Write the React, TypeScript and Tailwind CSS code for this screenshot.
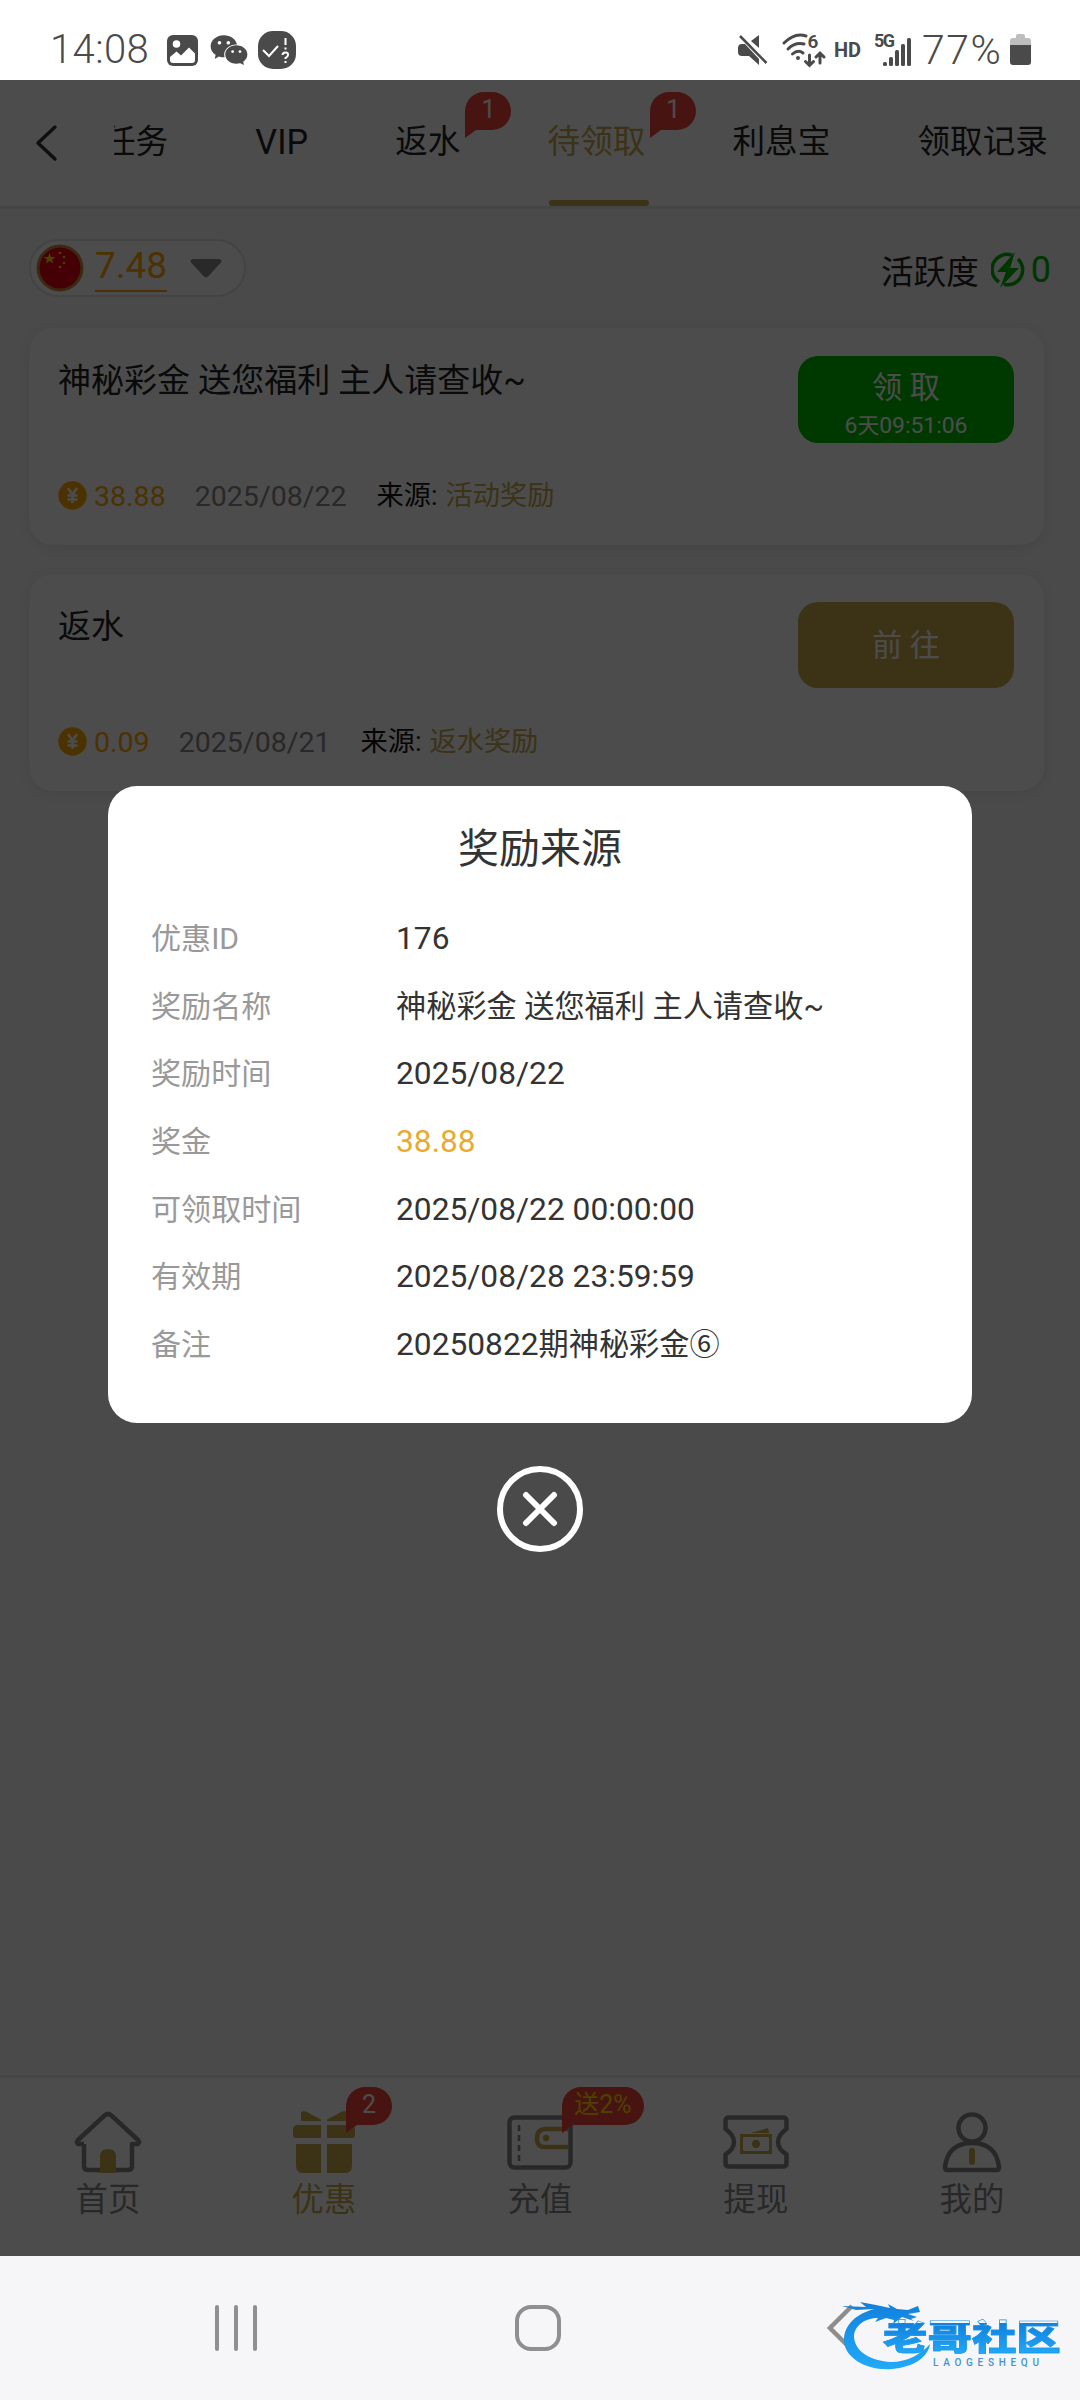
import React from "react";
import { AiFillWechat } from "react-icons/ai";

const tabs = [
  { name: "任务" },
  { name: "VIP" },
  { name: "返水", badge: "1" },
  { name: "待领取", badge: "1", active: true },
  { name: "利息宝" },
  { name: "领取记录" },
];

const rewards = [
  {
    title: "神秘彩金 送您福利 主人请查收~",
    amount: "38.88",
    date: "2025/08/22",
    source: "活动奖励",
    countdown: true,
  },
  {
    title: "返水",
    amount: "0.09",
    date: "2025/08/21",
    source: "返水奖励",
    countdown: false,
  },
];

const details = [
  { label: "优惠ID", value: <Num>176</Num> },
  { label: "奖励名称", value: "神秘彩金 送您福利 主人请查收~" },
  { label: "奖励时间", value: <Num>2025/08/22</Num> },
  { label: "奖金", value: <Num>38.88</Num>, highlight: true },
  { label: "可领取时间", value: <Num>2025/08/22 00:00:00</Num> },
  { label: "有效期", value: <Num>2025/08/28 23:59:59</Num> },
  {
    label: "备注",
    value: (
      <>
        <Num>20250822</Num>期神秘彩金⑥
      </>
    ),
  },
];

// digits are set slightly larger than the Chinese text beside them
function Num({ children }: { children: React.ReactNode }) {
  return <span className="text-[1.05em] leading-none">{children}</span>;
}

function Badge({
  text,
  width = 46,
  color = "text-white",
}: {
  text: string;
  width?: number;
  color?: string;
}) {
  return (
    <span className="relative block h-[46px]" style={{ width }}>
      <svg
        className="absolute inset-0"
        width={width}
        height="46"
        viewBox={`0 0 ${width} 46`}
      >
        <path
          d={`M0 46V19A19 19 0 0 1 19 0H${width - 19}A19 19 0 0 1 ${
            width - 19
          } 38H11Z`}
          fill="#f0453b"
        />
      </svg>
      <span
        className={`relative flex h-[35px] items-center justify-center text-[25px] leading-none ${color}`}
      >
        {text}
      </span>
    </span>
  );
}

function StatusBar() {
  return (
    <div className="flex h-20 items-center bg-white pt-[21px] pr-[49px] pb-[1px] pl-[50px] text-[#4a4a4a]">
      <span className="w-[117px] text-[40px] leading-none font-light tracking-[0.4px]">
        14:08
      </span>
      <svg width="31" height="31" viewBox="0 0 31 31">
        <rect width="31" height="31" rx="6" fill="#4a4a4a" />
        <circle cx="9.5" cy="9" r="3.8" fill="#fff" />
        <path
          d="M3 25V22L9.5 16.5L14 20.5L22 12.5L28 18.5V25Q28 28 25 28H6Q3 28 3 25Z"
          fill="#fff"
        />
      </svg>
      <AiFillWechat className="ml-[10px] size-[42px]" />
      <svg className="ml-[8px]" width="38" height="38" viewBox="0 0 38 38">
        <rect width="38" height="38" rx="15" fill="#4a4a4a" />
        <path
          d="M5 19L11 25L20 15"
          fill="none"
          stroke="#fff"
          strokeWidth="2"
        />
        <path
          d="M27.500 7V14M27.500 16.500V18.500M24.500 24Q24.500 21.500 27.500 21.500T30 24Q30 25.500 27.500 27V28M27.500 30V32"
          fill="none"
          stroke="#fff"
          strokeWidth="2"
        />
      </svg>
      <div className="ml-auto flex items-center">
        <svg width="30" height="32" viewBox="0 0 30 32" fill="#4a4a4a">
          <path d="M0 14Q0 10 4 10H7L21 25V31L11 22H4Q0 22 0 18Z" />
          <path d="M21 1V14L13 7Z" />
          <path d="M2 2L28.500 29" stroke="#4a4a4a" strokeWidth="2.500" />
        </svg>
        <svg
          className="ml-[13px] overflow-visible"
          width="46"
          height="34"
          viewBox="0 0 46 34"
          fill="none"
          stroke="#4a4a4a"
          strokeWidth="3"
          strokeLinecap="round"
        >
          <path d="M3 10Q14 -1 25 3M7 16Q14 9 23 11M11.500 21Q17 16 22 20" />
          <circle cx="17" cy="25" r="1" fill="#4a4a4a" strokeWidth="2" />
          <path d="M28.500 22V32M24.500 28.500L28.500 32.500L32.500 28.500M39 30V20.500M35 24L39 20L43 24" />
          <text
            x="26.500"
            y="15"
            fontSize="19"
            fontWeight="600"
            fill="#4a4a4a"
            stroke="none"
          >
            6
          </text>
        </svg>
        <span className="ml-[7px] text-[20px] leading-none font-bold">HD</span>
        <svg
          className="ml-[13px] overflow-visible"
          width="42"
          height="34"
          viewBox="0 0 42 34"
          fill="#4a4a4a"
        >
          <text x="0" y="14" fontSize="18" fontWeight="700" textLength="21">
            5G
          </text>
          <rect x="9" y="29" width="4" height="4" rx="1.500" />
          <rect x="15" y="24" width="4" height="9" rx="1.500" />
          <rect x="21" y="17" width="4" height="16" rx="1.500" />
          <rect x="27" y="11" width="4" height="22" rx="1.500" />
          <rect x="33" y="5" width="4" height="28" rx="1.500" />
        </svg>
        <span className="ml-[6px] w-[83px] text-[41px] leading-none font-light tracking-[1.5px]">
          77%
        </span>
        <svg className="ml-[5px]" width="21" height="32" viewBox="0 0 21 32">
          <path
            d="M6 2Q6 0 8 0H13Q15 0 15 2V4H18Q21 4 21 7V12H0V7Q0 4 3 4H6Z"
            fill="#bdbdbd"
          />
          <path d="M0 11H21V28Q21 31 18 31H3Q0 31 0 28Z" fill="#4a4a4a" />
        </svg>
      </div>
    </div>
  );
}

function TabHeader() {
  return (
    <header className="flex h-[129px] shrink-0 items-stretch border-b-[3px] border-[#e6e6e6] bg-white">
      <button className="flex w-[114px] shrink-0 items-center pl-[34px]">
        <svg
          width="24"
          height="38"
          viewBox="0 0 24 38"
          fill="none"
          stroke="#333"
          strokeWidth="3.500"
          strokeLinecap="round"
          strokeLinejoin="round"
        >
          <path d="M21 3L4 19L21 35" />
        </svg>
      </button>
      <nav className="flex flex-1 overflow-hidden">
        <div className="-ml-[11px] flex shrink-0 gap-[87.2px]">
          {tabs.map((tab) => (
            <div
              key={tab.name}
              className={`relative flex shrink-0 items-center pb-[1px] text-[32.6px] whitespace-nowrap ${
                tab.active ? "text-[#c8a84b]" : "text-[#222]"
              }`}
            >
              {tab.name === "VIP" ? <Num>VIP</Num> : tab.name}
              {tab.badge && (
                <span className="absolute top-[12px] left-full ml-[5px]">
                  <Badge text={tab.badge} />
                </span>
              )}
              {tab.active && (
                <span className="absolute bottom-0 left-px h-[6px] w-[100px] rounded-full bg-[#c8a84b]" />
              )}
            </div>
          ))}
        </div>
      </nav>
    </header>
  );
}

function BalanceRow() {
  return (
    <div className="flex items-start justify-between pt-[30px] pr-[29px] pl-[29px]">
      <div className="flex h-[58px] w-[217px] items-center rounded-full border-2 border-[#e2e2e2] bg-white pl-[5px]">
        <svg width="48" height="48" viewBox="0 0 48 48">
          <circle cx="24" cy="24" r="23.500" fill="#c98a3c" />
          <circle cx="24" cy="24" r="20.500" fill="#e60012" />
          <path
            d="M13.500 9L15 13H19.500L16 15.500L17.300 19.500L13.500 17L9.700 19.500L11 15.500L7.500 13H12Z"
            fill="#ffd400"
          />
          <g fill="#ffd400">
            <circle cx="24" cy="9" r="1.300" />
            <circle cx="28" cy="13" r="1.300" />
            <circle cx="28" cy="19" r="1.300" />
            <circle cx="24" cy="23" r="1.300" />
          </g>
        </svg>
        <span className="-mt-[2px] ml-[11px] border-b-2 border-[#fb9a1c] pt-[4px] pb-[5px] text-[37px] leading-[38px] text-[#ffa800]">
          7.48
        </span>
        <svg className="ml-[23px]" width="32" height="19" viewBox="0 0 32 19">
          <path
            d="M3 0H29Q33 1 30.500 4L18.500 17Q16 19.500 13.500 17L1.500 4Q-1 1 3 0Z"
            fill="#8a8a8a"
          />
        </svg>
      </div>
      <div className="flex items-center pt-[11px]">
        <span className="pt-[7px] text-[32.6px] leading-none text-[#222]">
          活跃度
        </span>
        <svg className="ml-[12px]" width="34" height="36" viewBox="0 0 34 36">
          <path
            d="M21 3.200A15 15 0 0 0 8 30M13 32.400A15 15 0 0 0 27 7"
            fill="none"
            stroke="#00b400"
            strokeWidth="3.500"
          />
          <path d="M24 0L6 20H15L9 36L28 16H19Z" fill="#00b400" />
        </svg>
        <span className="ml-[6px] text-[36px] leading-none text-[#00b400]">
          0
        </span>
      </div>
    </div>
  );
}

function Coin() {
  return (
    <svg
      width="29"
      height="29"
      viewBox="0 0 29 29"
      fill="none"
      stroke="#fff"
      strokeWidth="2.600"
    >
      <circle cx="14.500" cy="14.500" r="14.200" fill="#ffa800" stroke="none" />
      <path d="M10 7L14.500 13.500L19 7M14.500 13V22M9.500 14.500H19.500M9.500 18.500H19.500" />
    </svg>
  );
}

function RewardCard({ reward }: { reward: (typeof rewards)[number] }) {
  return (
    <div className="flex h-[217px] flex-col rounded-[24px] bg-white pt-[28px] pr-[30px] pl-[29px] shadow-[0_2px_12px_rgba(0,0,0,0.08)]">
      <div className="flex h-[87px] items-start justify-between">
        <h3 className="pt-1 text-[33px] leading-[42px] text-[#222]">
          {reward.title}
        </h3>
        {reward.countdown ? (
          <button className="flex h-[87px] w-[216px] flex-col items-center rounded-[20px] bg-[#00be00] pt-[14px] text-white">
            <span className="text-[30.2px] leading-9">领 取</span>
            <span className="mt-[8px] text-[21.8px] leading-6">
              <Num>6</Num>天<Num>09:51:06</Num>
            </span>
          </button>
        ) : (
          <button className="flex h-[86px] w-[216px] items-center justify-center rounded-[20px] bg-[#c8a84b] pt-[2px] text-[30.2px] text-white">
            前 往
          </button>
        )}
      </div>
      <div className="mt-[36px] flex h-9 items-center text-[27.200px] leading-none">
        <span className="-mt-[4px]">
          <Coin />
        </span>
        <span className="ml-[7px] text-[#ffa800]">
          <Num>{reward.amount}</Num>
        </span>
        <span className="ml-[29px] text-[#888]">
          <Num>{reward.date}</Num>
        </span>
        <span className="ml-[30px] text-[#111]">来源:</span>
        <span className="ml-[8px] text-[#c8a84b]">{reward.source}</span>
      </div>
    </div>
  );
}

function HomeIcon() {
  return (
    <svg width="68" height="62" viewBox="0 0 68 62" fill="none">
      <path
        d="M10 33V55Q10 59 14 59H54Q58 59 58 55V33H64Q66 31 64 29L38 5Q34 1 30 5L4 29Q2 31 4 33H10"
        stroke="#888"
        strokeWidth="4.500"
        strokeLinejoin="round"
      />
      <path d="M26 62V45Q26 38 34 38T42 45V62Z" fill="#c8a84b" />
    </svg>
  );
}

function GiftIcon() {
  return (
    <svg width="62" height="62" viewBox="0 0 62 62" fill="#c8a84b">
      <path d="M8 9V2Q9 -1 13 0.500L28 8.500V10H8ZM54 9V2Q53 -1 49 0.500L34 8.500V10H54Z" />
      <path d="M5 14H28V27H3Q0 27 0 24V19Q0 14 5 14ZM34 14H57Q62 14 62 19V24Q62 27 59 27H34Z" />
      <path d="M3 33H28V62H10Q3 62 3 54ZM34 33H59V54Q59 62 52 62H34Z" />
    </svg>
  );
}

function DepositIcon() {
  return (
    <svg width="66" height="55" viewBox="0 0 66 55" fill="none">
      <rect
        x="2.500"
        y="2.500"
        width="61"
        height="50"
        rx="5"
        stroke="#888"
        strokeWidth="4.500"
      />
      <path d="M12 10V46" stroke="#888" strokeWidth="2.600" strokeDasharray="6 4" />
      <path
        d="M61 14H39Q30 14 30 23.500T39 32H61"
        stroke="#c8a84b"
        strokeWidth="4.500"
      />
      <circle cx="39" cy="23" r="3.200" fill="#c8a84b" />
    </svg>
  );
}

function WithdrawIcon() {
  return (
    <svg width="66" height="54" viewBox="0 0 66 54" fill="none">
      <path
        d="M2.500 14V6Q2.500 2.500 6 2.500H60Q63.500 2.500 63.500 6V14Q55 20 55 27T63.500 39.500V48Q63.500 51.500 60 51.500H6Q2.500 51.500 2.500 48V39.500Q11 34 11 27T2.500 14Z"
        stroke="#888"
        strokeWidth="4.500"
        strokeLinejoin="round"
      />
      <rect
        x="18.500"
        y="20.500"
        width="29"
        height="17"
        stroke="#c8a84b"
        strokeWidth="3"
      />
      <path
        d="M18 25L23 20H18ZM48 25L43 20H48ZM18 33L23 38H18ZM48 33L43 38H48ZM28 18L45 13L46 18Z"
        fill="#c8a84b"
      />
      <circle cx="33" cy="29" r="4.200" fill="#c8a84b" />
    </svg>
  );
}

function ProfileIcon() {
  return (
    <svg width="60" height="62" viewBox="0 0 60 62" fill="none">
      <circle cx="30" cy="17" r="13.500" stroke="#888" strokeWidth="4.500" />
      <path
        d="M5 59Q3 59 3 56Q6 32 30 32T57 56Q57 59 55 59Z"
        stroke="#888"
        strokeWidth="4.500"
        strokeLinejoin="round"
      />
      <path
        d="M30 40V51"
        stroke="#c8a84b"
        strokeWidth="6"
        strokeLinecap="round"
      />
    </svg>
  );
}

const navItems = [
  { name: "首页", icon: <HomeIcon /> },
  { name: "优惠", icon: <GiftIcon />, active: true, badge: <Badge text="2" /> },
  {
    name: "充值",
    icon: <DepositIcon />,
    badge: <Badge text="送2%" width={82} color="text-[#ffd900]" />,
  },
  { name: "提现", icon: <WithdrawIcon /> },
  { name: "我的", icon: <ProfileIcon /> },
];

function BottomNav() {
  return (
    <nav className="mt-auto flex h-[181px] shrink-0 border-t-[3px] border-[#ececec] bg-white">
      {navItems.map((item) => (
        <div
          key={item.name}
          className="relative flex flex-1 flex-col items-center pt-[32px]"
        >
          <div className="flex h-[64px] items-center">{item.icon}</div>
          <span
            className={`mt-[5px] text-[32.4px] leading-[42px] ${
              item.active ? "text-[#c8a84b]" : "text-[#888]"
            }`}
          >
            {item.name}
          </span>
          {item.badge && (
            <span className="absolute top-[9px] left-1/2 ml-[22px]">
              {item.badge}
            </span>
          )}
        </div>
      ))}
    </nav>
  );
}

function RewardDialog() {
  return (
    <div className="absolute inset-0 flex flex-col items-center bg-black/70 pt-[706px]">
      <div className="flex h-[637px] w-[864px] flex-col rounded-[29px] bg-white px-[43px]">
        <h2 className="pt-[37px] text-center text-[41px] leading-[52px] text-[#333]">
          奖励来源
        </h2>
        <dl className="mt-[30px] flex flex-col text-[30.2px]">
          {details.map((d) => (
            <div key={d.label} className="flex h-[67.6px] items-center">
              <dt className="w-[245px] text-[30.100px] text-[#999]">
                {d.label}
              </dt>
              <dd className={d.highlight ? "text-[#eaab2c]" : "text-[#333]"}>
                {d.value}
              </dd>
            </div>
          ))}
        </dl>
      </div>
      <button className="mt-[42px]">
        <svg
          width="88"
          height="88"
          viewBox="0 0 88 88"
          fill="none"
          stroke="#fff"
          strokeWidth="6"
          strokeLinecap="round"
        >
          <circle cx="44" cy="44" r="40" />
          <path d="M30 30L58 58M58 30L30 58" />
        </svg>
      </button>
    </div>
  );
}

function Watermark() {
  return (
    <div className="absolute top-[38px] left-[842px] h-[80px] w-[230px]">
      <svg className="absolute inset-0" width="100" height="80" viewBox="0 0 100 80">
        <defs>
          <linearGradient id="dragon" x1="0" y1="0" x2="0" y2="1">
            <stop offset="0" stopColor="#1280dc" />
            <stop offset="1" stopColor="#22aaf8" />
          </linearGradient>
        </defs>
        <path
          d="M32 15C14 20 2 31 2 46C2 64 25 77 50 75C72 73 86 63 88 50C79 60 66 68 49 68C29 67 13 58 12 43C12 31 24 24 36 24L33 28L44 24L52 26L51 30L60 23L72 27L69 25L75 23L66 20L78 18L76 12L66 16L55 15L46 10L48 14L34 11L18 8L24 13L0 12L14 16Z"
          fill="url(#dragon)"
        />
      </svg>
      <div className="absolute top-[29px] left-[41px] flex flex-col">
        <span className="origin-left scale-x-[1.27] bg-linear-to-b from-[#1280dc] to-[#22aaf8] bg-clip-text text-[35px] leading-[32px] font-black whitespace-nowrap text-transparent [-webkit-text-stroke:0.6px_#1c94ea]">
          老哥社区
        </span>
        <span className="mt-[3px] ml-[50px] text-[10px] leading-none font-medium tracking-[4.700px] text-[#3f94d8]">
          LAOGESHEQU
        </span>
      </div>
    </div>
  );
}

function SystemNav() {
  return (
    <div className="relative flex h-[144px] items-center bg-[#f6f6f8] pl-[215px]">
      <div className="flex w-[42px] justify-between">
        <span className="h-[46px] w-[4px] rounded-full bg-[#8f8f8f]" />
        <span className="h-[46px] w-[4px] rounded-full bg-[#8f8f8f]" />
        <span className="h-[46px] w-[4px] rounded-full bg-[#8f8f8f]" />
      </div>
      <span className="ml-[258px] size-[46px] rounded-[16px] border-4 border-[#8f8f8f]" />
      <svg className="ml-[266px]" width="28" height="48" viewBox="0 0 28 48">
        <path
          d="M25 2L3 24L25 46"
          fill="none"
          stroke="#8f8c8a"
          strokeWidth="4.500"
        />
      </svg>
      <Watermark />
    </div>
  );
}

const App = () => {
  return (
    <div className="flex h-[2400px] w-[1080px] flex-col overflow-hidden font-['Roboto','Noto_Sans_CJK_SC',sans-serif]">
      <StatusBar />
      <main className="relative flex h-[2176px] flex-col bg-[#f7f7f7]">
        <TabHeader />
        <BalanceRow />
        <div className="mt-[31px] flex flex-col gap-[29px] pr-[36px] pl-[29px]">
          {rewards.map((reward) => (
            <RewardCard key={reward.date} reward={reward} />
          ))}
        </div>
        <BottomNav />
        <RewardDialog />
      </main>
      <SystemNav />
    </div>
  );
};

export default App;
